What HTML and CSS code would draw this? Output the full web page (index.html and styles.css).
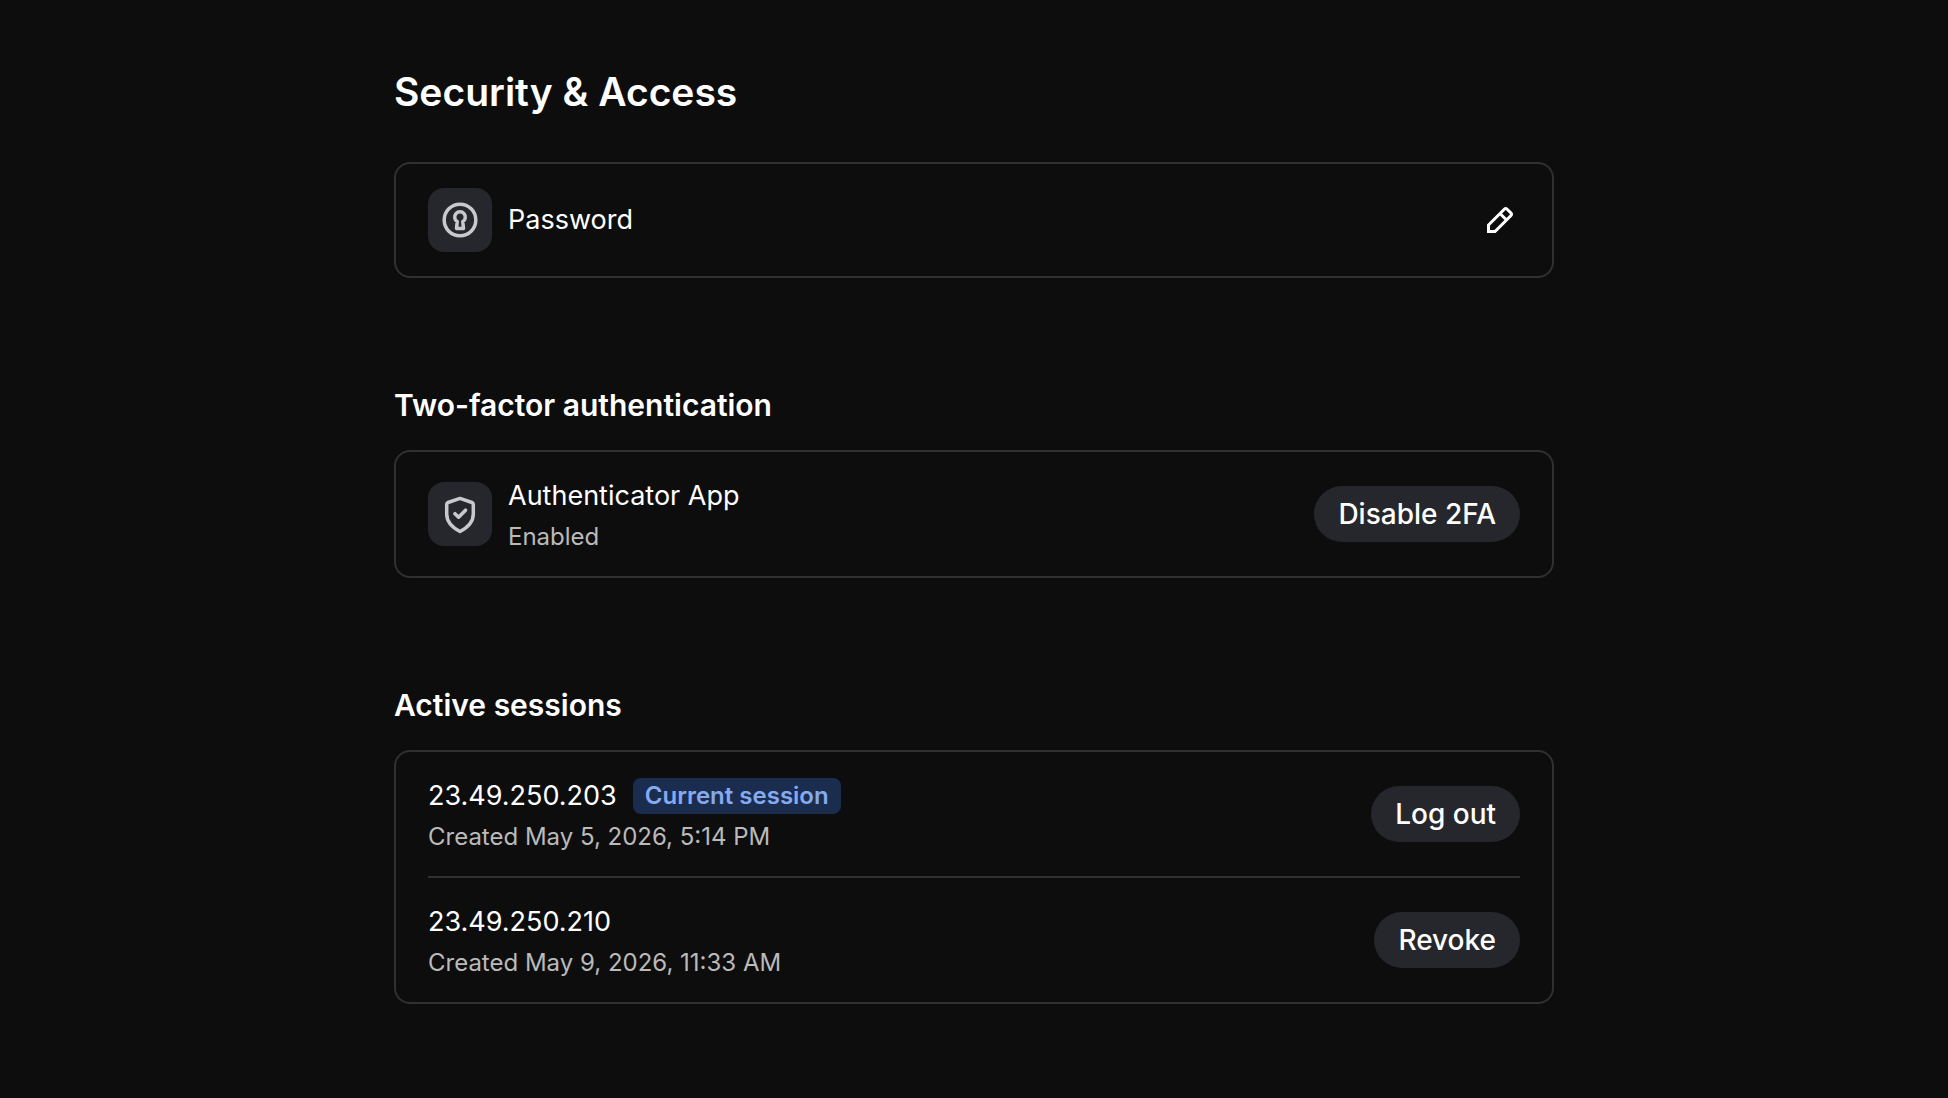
FILE: index.html
```html
<!DOCTYPE html>
<html lang="en">
<head>
    <meta charset="UTF-8">
    <meta name="viewport" content="width=device-width, initial-scale=1.0">
    <title>Security &amp; Access</title>
    <link rel="stylesheet" href="styles.css">
</head>
<body>
    <main class="page">
        <h1>Security &amp; Access</h1>

        <section class="card">
            <div class="row row-single">
                <div class="tile">
                    <svg class="tile-icon" viewBox="0 0 40 40" stroke-width="3.5" aria-hidden="true">
                        <circle cx="20" cy="20" r="15.8"/>
                        <path d="M17.2 21.6L16.5 28.5h7L22.8 21.6A5.3 5.3 0 1 0 17.2 21.6z"/>
                    </svg>
                </div>
                <div class="info">
                    <div class="name">Password</div>
                </div>
                <button type="button" class="edit" aria-label="Edit password">
                    <svg class="edit-icon" viewBox="0 0 32 32" stroke-width="3" aria-hidden="true">
                        <path d="M4.5 27.5V21L20.3 5.2a2 2 0 0 1 2.8 0l3.7 3.7a2 2 0 0 1 0 2.8L11 27.5z"/>
                        <path d="M16 9.5l6.5 6.5"/>
                    </svg>
                </button>
            </div>
        </section>

        <section class="group">
            <h2>Two-factor authentication</h2>
            <div class="card">
                <div class="row">
                    <div class="tile">
                        <svg class="tile-icon" viewBox="0 0 40 40" stroke-width="3.5" aria-hidden="true">
                            <path d="M20 4.4L32 8.5q1.3.5 1.3 2V20C33.3 28 28 33.3 20 37.5C12 33.3 6.7 28 6.7 20V10.5q0-1.5 1.3-2z"/>
                            <path d="M15 19.7l3.6 3.5 6.9-7"/>
                        </svg>
                    </div>
                    <div class="info">
                        <div class="name">Authenticator App</div>
                        <div class="detail">Enabled</div>
                    </div>
                    <button type="button" class="btn">Disable 2FA</button>
                </div>
            </div>
        </section>

        <section class="group">
            <h2>Active sessions</h2>
            <ul class="card">
                <li class="row">
                    <div class="info">
                        <div class="name">23.49.250.203 <span class="badge">Current session</span></div>
                        <div class="detail">Created May 5, 2026, 5:14 PM</div>
                    </div>
                    <button type="button" class="btn">Log out</button>
                </li>
                <li class="row">
                    <div class="info">
                        <div class="name">23.49.250.210</div>
                        <div class="detail">Created May 9, 2026, 11:33 AM</div>
                    </div>
                    <button type="button" class="btn">Revoke</button>
                </li>
            </ul>
        </section>
    </main>
</body>
</html>
```

FILE: styles.css
```css
* {
    box-sizing: border-box;
}

body {
    margin: 0;
    background-color: #0d0d0d;
    color: #ffffff;
    font-family: Inter, "Liberation Sans", sans-serif;
    font-size: 27px;
    line-height: 46px;
}

.page {
    max-width: 1160px;
    margin: 0 auto;
    padding: 68px 0;
}

h1 {
    margin: 0 0 46px;
    font-size: 39px;
    font-weight: 600;
    line-height: 48px;
}

h2 {
    margin: 0 0 22px;
    font-size: 30px;
    font-weight: 600;
    line-height: 46px;
}

.group {
    margin-top: 104px;
}

.card {
    margin: 0;
    padding: 0 32px;
    border: 2px solid #303030;
    border-radius: 16px;
    list-style: none;
}

.row {
    display: flex;
    align-items: center;
    gap: 16px;
    padding: 21px 0;
}

.row-single {
    padding: 24px 0;
}

.row + .row {
    border-top: 2px solid #303030;
}

.tile {
    display: flex;
    align-items: center;
    justify-content: center;
    width: 64px;
    height: 64px;
    border-radius: 16px;
    background-color: #26272c;
}

.tile-icon,
.edit-icon {
    fill: none;
    stroke: #c8c9ce;
    stroke-linecap: round;
    stroke-linejoin: round;
}

.tile-icon {
    width: 40px;
    height: 40px;
}

.edit-icon {
    width: 32px;
    height: 32px;
    stroke: #ffffff;
    stroke-linecap: butt;
    stroke-linejoin: miter;
}

.info {
    flex: 1;
}

.name {
    display: flex;
    align-items: center;
    gap: 16px;
}

.detail {
    color: #bababa;
    font-size: 24px;
    line-height: 36px;
}

.badge {
    padding: 0 12px;
    border-radius: 8px;
    background-color: #1a2d4f;
    color: #86aaf0;
    font-size: 24px;
    font-weight: 600;
    line-height: 36px;
}

button {
    border: none;
    color: #ffffff;
    font-family: inherit;
    cursor: pointer;
}

.btn {
    height: 56px;
    padding: 0 24px;
    border-radius: 28px;
    background-color: #26272c;
    font-size: 28px;
    font-weight: 500;
}

.btn:hover {
    background-color: #33343a;
}

.edit {
    display: flex;
    align-items: center;
    justify-content: center;
    width: 40px;
    height: 40px;
    padding: 0;
    background: none;
}
```
